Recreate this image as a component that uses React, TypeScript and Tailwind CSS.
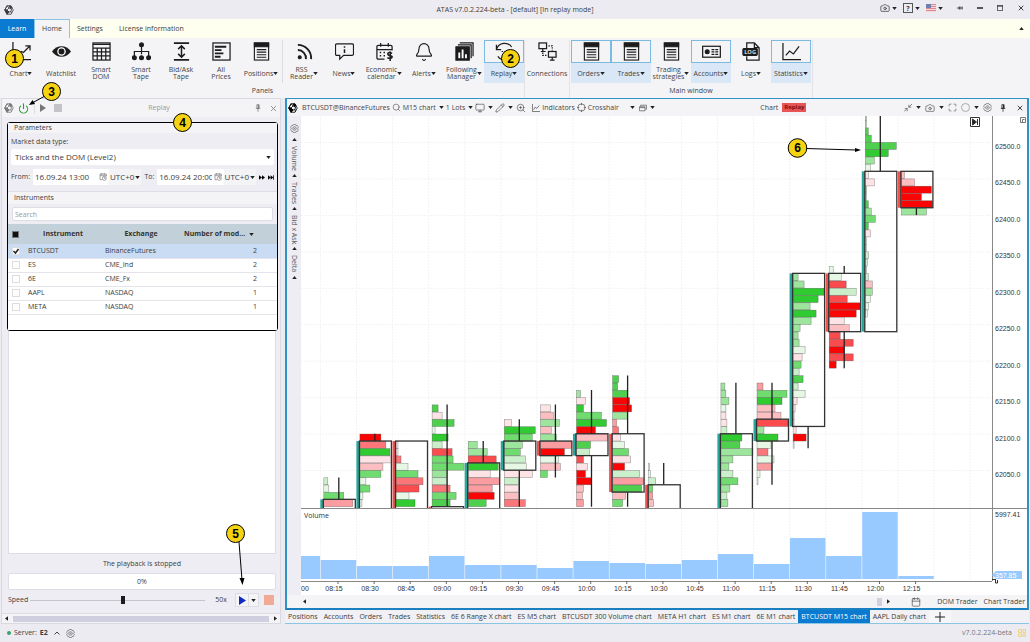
import React, { useState } from 'react';
import { Bell, Calendar, Camera, Maximize, Monitor, Pencil, Pin, Power, Search, X, ZoomIn } from 'lucide-react';

type Candle = {
  col: number;
  first: number;
  rows: string;
  body: [number, number];
  wick: [number, number];
  up: boolean;
};

type RibbonItem = {
  label: string[];
  icon: React.ReactNode;
  menu?: boolean;
  active?: boolean;
  callout?: number;
};

const COL_WIDTH = 36.1;
const ROW_HEIGHT = 7.29;
const PRICE_STEP = 36.45;

// Each cluster is "<width><colour>", listed from the highest price down
const candles: Candle[] = [
  { col: 0, first: 42, rows: '4g2 5g1 20g4 29r3', body: [45, 48], wick: [42, 45], up: true },
  { col: 1, first: 36, rows: '21r6 26r4 30g6 32r1 23r2 21g4 6g1 10g4 3g1 2g1', body: [37, 48], wick: [36, 37], up: true },
  { col: 2, first: 37, rows: '2r1 2r1 5r4 12g1 22g4 27r4 23r5 13g1 19g6', body: [37, 48], wick: [37, 37], up: false },
  { col: 3, first: 32, rows: '6g5 10r1 22g5 3g1 16g6 10g2 20r5 21g4 32g4 15g3 15g2 18r4 24g4 18g5', body: [46, 48], wick: [32, 46], up: false },
  { col: 4, first: 37, rows: '9g3 19g3 28r5 30g6 22r1 31r3 24r3 26r6 18g5', body: [40, 48], wick: [37, 40], up: true },
  { col: 5, first: 34, rows: '7r1 31g6 28g4 18g3 16g4 21g2 22g1 28r1 14g2 14r1 14r2 21r4', body: [37, 41], wick: [34, 46], up: true },
  { col: 6, first: 32, rows: '10r1 13r2 19g3 11r2 16g3 31r3 24r6 18g1 20r2 7g4', body: [37, 39], wick: [32, 42], up: false },
  { col: 7, first: 30, rows: '4g3 9r1 7g6 25g4 30g6 19r6 31r2 14g5 13g2 7r5 11r1 9r6 15r6 7r2 6r2 7r3', body: [36, 39], wick: [30, 46], up: true },
  { col: 8, first: 28, rows: '6g5 5g5 15g5 17r6 19r6 15g3 4r3 6r4 8r1 12g1 16g4 18r1 12r6 27g2 31r3 29g5 13r2 10g4', body: [36, 44], wick: [28, 46], up: false },
  { col: 9, first: 40, rows: '1g1 2g1 7g2 4g4 4r3 5r2', body: [43, 48], wick: [40, 43], up: false },
  { col: 11, first: 29, rows: '4g3 5g3 8g3 5g1 5r1 6r1 6g2 21g6 19g5 32g3 12g3 8g3 12g2 17g4 9g3 6g2 7g3', body: [36, 48], wick: [29, 36], up: true },
  { col: 12, first: 29, rows: '6r3 30g4 25g6 18r2 24r2 31r5 7g3 21g6 14g1 11r4 17g1 15r3 3g1 1g1', body: [34, 37], wick: [29, 43], up: true },
  { col: 13, first: 14, rows: '5g3 11g3 31g6 25g6 17g3 23g6 18g3 7g3 5g3 6g3 12g1 9r1 8g4 6g2 10g5 5g2 12g1 4r1 2r1 1g1 1g1 3r1 13r6 1g1', body: [14, 35], wick: [14, 38], up: true },
  { col: 14, first: 13, rows: '4g1 12g1 17r5 27g2 18r5 31r6 27r6 15r1 20r2 11r5 24r5 15r6 24r5 7r6', body: [14, 22], wick: [13, 27], up: false },
  { col: 15, first: -8, rows: '1g3 1g3 3g5 6g5 31g5 23g6 9g3 5g1 3r1 9r1 1g4 1g3 3g5 6g3 10g4 3g5 5r1 1g1 1g1 3g2 2g2 1g2 3g2 7r2 7g3 5g1 3g1 2g1', body: [0, 22], wick: [-8, 22], up: true },
  { col: 16, first: 0, rows: '3r2 13r2 30r6 20r6 31r6 25g3', body: [0, 5], wick: [0, 6], up: false },
];

const palette: Record<string, string> = {
  g1: '#e6f7e6', g2: '#cbefcb', g3: '#9de49d', g4: '#70dc70', g5: '#4ed04e', g6: '#30cb30',
  r1: '#fde3e5', r2: '#fbbfc2', r3: '#fb9da0', r4: '#fb7679', r5: '#fa4b4e', r6: '#fa0505',
};

const volumes = [23, 19, 13, 13, 23, 14, 14, 11, 18, 16, 15, 19, 25, 15, 41, 23, 67, 3];
const times = ['08:15', '08:30', '08:45', '09:00', '09:15', '09:30', '09:45', '10:00', '10:15', '10:30', '10:45', '11:00', '11:15', '11:30', '11:45', '12:00', '12:15'];
const prices = [62500, 62450, 62400, 62350, 62300, 62250, 62200, 62150, 62100, 62050];

const instruments = [
  { name: 'BTCUSDT', exchange: 'BinanceFutures', modes: 2 },
  { name: 'ES', exchange: 'CME_Ind', modes: 2 },
  { name: '6E', exchange: 'CME_Fx', modes: 2 },
  { name: 'AAPL', exchange: 'NASDAQ', modes: 1 },
  { name: 'META', exchange: 'NASDAQ', modes: 1 },
];

const chartTabs = ['Positions', 'Accounts', 'Orders', 'Trades', 'Statistics', '6E 6 Range X chart', 'ES M5 chart', 'BTCUSDT 300 Volume chart', 'META H1 chart', 'ES M1 chart', '6E M1 chart', 'BTCUSDT M15 chart', 'AAPL Daily chart'];

const Caret = ({ className = '' }: { className?: string }) => (
  <svg viewBox="0 0 6 4" className={`h-[3px] w-[5px] shrink-0 fill-[#222] ${className}`}>
    <path d="M0 0h6L3 4z" />
  </svg>
);

const Logo = ({ className = '' }: { className?: string }) => (
  <svg viewBox="0 0 20 20" className={`size-[10px] shrink-0 ${className}`} fill="none" stroke="currentColor" strokeWidth="1.6">
    <path d="M6 1.5h8l4.5 8.5-4.5 8.5H6L1.5 10z" />
    <path d="M6 1.5 10 6 6 10 1.5 10zM6 10l4 4 4-1 1-5-5-2M10 14l-4 4.5M14 13l1 4" />
    <path d="M6 10l4 4-4 4.5L1.5 10zM10 2h4l2 4-3 1z" fill="currentColor" />
  </svg>
);

const Gear = () => (
  <svg viewBox="0 0 20 20" className="size-[9px] shrink-0" fill="none" stroke="#666" strokeWidth="1.5">
    <path d="M7.5 1h5l1 2.5 2.5-.5 2.5 4.5L17 10l1.5 2.5L16 17l-2.5-.5-1 2.5h-5l-1-2.5L4 17l-2.5-4.5L3 10 1.5 7.5 4 3l2.5.5z" />
    <circle cx="10" cy="10" r="4" />
    <circle cx="10" cy="10" r="1" />
  </svg>
);

const PinIcon = ({ className = '' }: { className?: string }) => (
  <svg viewBox="0 0 8 10" className={`h-2 w-[6px] shrink-0 ${className}`} fill="none" stroke="currentColor">
    <path d="M2.500 0.500h3v5h-3zM1 5.500h6M4 5.500V10" />
    <path d="M4.500 1v4" strokeWidth="1.500" />
  </svg>
);

const Badge = ({ n, className = '' }: { n: number; className?: string }) => (
  <span className={`pointer-events-none absolute z-10 flex size-[19px] items-center justify-center rounded-full border border-black bg-[#f5d312] font-['Liberation_Sans',sans-serif] text-[12px] leading-none font-bold text-black ${className}`}>
    {n}
  </span>
);

const Ic = ({ children }: { children: React.ReactNode }) => (
  <svg viewBox="0 0 20 20" className="size-[19px]" fill="none" stroke="#1c1c1c" strokeWidth="1.3">
    {children}
  </svg>
);

const ListIcon = () => (
  <svg viewBox="0 0 20 20" className="size-[19px]" fill="none" stroke="#1c1c1c" strokeWidth="1.2">
    <rect x="2.5" y="1" width="15" height="18" />
    <path d="M2.5 1h15v4h-15z" fill="#1c1c1c" />
    <path d="M5 8h10M5 10.7h10M5 13.4h10M5 16.1h10" />
  </svg>
);

const panelItems: RibbonItem[] = [
  { label: ['Chart'], menu: true, callout: 1, icon: <Ic><path d="M1 0v18.5h19M5 14l5-4 2 1 7-7M14 4h5v5" /></Ic> },
  { label: ['Watchlist'], icon: <Ic><path d="M0 10C5 2.5 15 2.5 20 10 15 17.5 5 17.5 0 10z" fill="#1c1c1c" stroke="none" /><circle cx="10" cy="10" r="4.5" fill="#fff" stroke="none" /><circle cx="10" cy="10" r="2.5" fill="#1c1c1c" /></Ic> },
  { label: ['Smart', 'DOM'], icon: <Ic><rect x="1" y="1" width="18" height="18" /><path d="M1 2.5h18M1 6.5h18M1 10.5h18M1 14.5h18M5.5 6v13M10 6v13M14.5 6v13" /></Ic> },
  { label: ['Smart', 'Tape'], icon: <Ic><path d="M10 4v9M2.5 15v-5h15v5" /><circle cx="10" cy="3" r="2" fill="#1c1c1c" /><circle cx="2.5" cy="16.5" r="2" fill="#1c1c1c" /><circle cx="10" cy="16.5" r="2" fill="#1c1c1c" /><circle cx="17.5" cy="16.5" r="2" fill="#1c1c1c" /></Ic> },
  { label: ['Bid/Ask', 'Tape'], icon: <Ic><path d="M2 1.2h16M2 18.8h16" strokeWidth="1.8" /><path d="M10 4v12M6.5 7.5 10 4l3.5 3.5M6.5 12.5 10 16l3.5-3.5" strokeWidth="1.6" /></Ic> },
  { label: ['All', 'Prices'], icon: <Ic><rect x="1" y="1" width="18" height="18" /><path d="M3 5h12M3 8.5h7M3 12h9M3 15.5h6" strokeWidth="2" /></Ic> },
  { label: ['Positions'], menu: true, icon: <ListIcon /> },
];

const serviceItems: RibbonItem[] = [
  { label: ['RSS', 'Reader'], menu: true, icon: <Ic><circle cx="5" cy="16" r="1.5" fill="#1c1c1c" /><path d="M3 8.5a8.5 8.5 0 0 1 8.5 9.5M3 3a14 14 0 0 1 14 15" strokeWidth="2" /></Ic> },
  { label: ['News'], menu: true, icon: <Ic><path d="M2 2h16q1.5 0 1.5 1.5v9q0 1.5-1.5 1.5H9l-4 4v-4H2Q.5 14 .5 12.5v-9Q.5 2 2 2z" /><path d="M10 4.5V6M10 7.5v4" strokeWidth="1.6" /></Ic> },
  { label: ['Economic', 'calendar'], menu: true, icon: <Ic><path d="M10 18H3.5Q2 18 2 16.5V5q0-1.5 1.5-1.5h13Q18 3.5 18 5v4M2 8h16M6 1v4M14 1v4" /><path d="M5 11h1.5M9 11h1.5M5 14.5h1.5M9 14.5h1.5M18 12q-4-2-4.5 0 0 2 2.500 2.500T18 16q-1 2-5 .5M16 10v10" strokeWidth="1.6" /></Ic> },
  { label: ['Alerts'], menu: true, icon: <Bell className="size-[20px] text-[#1c1c1c]" strokeWidth={1.4} /> },
  { label: ['Following', 'Manager'], menu: true, icon: <Ic><path d="M1 5h14v14H1z" fill="#1c1c1c" /><path d="M3 3h14v14M5 1h14v14" /><path d="M4.5 17v-6M8 17V8M11.5 17v-4" stroke="#fff" strokeWidth="2" /></Ic> },
  { label: ['Replay'], menu: true, active: true, callout: 2, icon: <Ic><path d="M1.5 3v5h5M1.5 8A9 9 0 0 1 18 6M19 12A9 9 0 0 1 3 15" strokeDasharray="20 2" /><path d="M7 10h7" strokeDasharray="1.5 1.5" /></Ic> },
];

const connectionItems: RibbonItem[] = [
  { label: ['Connections'], icon: <Ic><rect x="1" y="1" width="8" height="6" /><path d="M5 7v3M3 10h5" /><rect x="11" y="10" width="8" height="6" /><path d="M15 16v3M12.5 19h5" /><path d="M11 4h4v5M5 11v3h5" strokeDasharray="1.5 1.2" /></Ic> },
];

const windowItems: RibbonItem[] = [
  { label: ['Orders'], menu: true, active: true, icon: <ListIcon /> },
  { label: ['Trades'], menu: true, active: true, icon: <ListIcon /> },
  { label: ['Trading', 'strategies'], menu: true, icon: <ListIcon /> },
  { label: ['Accounts'], menu: true, active: true, icon: <Ic><rect x=".7" y="4.5" width="18.6" height="11.5" /><circle cx="5.5" cy="10.2" r="2" fill="#1c1c1c" /><path d="M10 8h3M14 8h3M10 10.5h3M14 10.5h3M10 13h3M14 13h3" /></Ic> },
  { label: ['Logs'], menu: true, icon: <Ic><path d="M5 7V1h8l5 5v13H5v-4M13 1v5h5" /><rect x="1" y="7" width="15" height="7" rx="1" fill="#1c1c1c" /><text x="8.5" y="12.6" fontSize="6" fontWeight="700" textAnchor="middle" fill="#ddd" stroke="none">LOG</text></Ic> },
  { label: ['Statistics'], menu: true, active: true, icon: <Ic><path d="M1 1v17.5h19M4 14l4-4.5 4 3 6-8" /></Ic> },
];

const RibbonButton = ({ item }: { item: RibbonItem }) => (
  <button type="button" className="relative w-10 shrink-0">
    <span className={`flex h-[23px] items-center justify-center ${item.active ? 'border border-[#7abbdf]' : ''}`}>{item.icon}</span>
    <span className={`flex h-5 items-center justify-center leading-[7px] ${item.active ? 'bg-[#d9e7f7]' : ''}`}>
      <span>
        {item.label.map((line) => (
          <span key={line} className="block">{line}</span>
        ))}
      </span>
      {item.menu && <Caret />}
    </span>
    {item.callout === 1 && <Badge n={1} className="top-[9px] left-1" />}
    {item.callout === 2 && <Badge n={2} className="top-[9px] left-[17px]" />}
  </button>
);

const Ribbon = () => (
  <div className="flex h-[60px] overflow-hidden bg-[#f4f4f7] pt-[2px] pl-px text-[#444]">
    <div className="border-r border-[#e2e2e8]">
      <div className="flex">
        {panelItems.map((item) => <RibbonButton key={item.label.join(' ')} item={item} />)}
        <span className="mx-px w-px bg-[#dcdce3]" />
        {serviceItems.map((item) => <RibbonButton key={item.label.join(' ')} item={item} />)}
      </div>
      <p className="mt-[3px] text-center leading-[10px]">Panels</p>
    </div>
    <div className="flex items-start border-r border-[#e2e2e8] px-[2px]">
      {connectionItems.map((item) => <RibbonButton key={item.label.join(' ')} item={item} />)}
    </div>
    <div className="border-r border-[#e2e2e8] px-px">
      <div className="flex">
        {windowItems.map((item) => <RibbonButton key={item.label.join(' ')} item={item} />)}
      </div>
      <p className="mt-[3px] text-center leading-[10px]">Main window</p>
    </div>
  </div>
);

const TitleBar = () => (
  <header className="relative flex h-[19px] items-center justify-between bg-[#ecebf2] px-1">
    <Logo />
    <h1 className="absolute inset-x-0 text-center leading-[19px]">ATAS v7.0.2.224-beta - [default] [In replay mode]</h1>
    <div className="relative flex items-center gap-[14px] pr-px pb-[3px]">
      <div className="flex items-center gap-[6px]">
        <button type="button" aria-label="Screenshot" className="flex items-center gap-[2px]"><Camera className="size-[10px]" strokeWidth={1.8} /><Caret /></button>
        <button type="button" className="flex items-center gap-[2px]"><span className="flex size-[10px] items-center justify-center border border-[#555] leading-none font-bold">?</span><Caret /></button>
        <button type="button" aria-label="Language" className="flex items-center gap-[2px]">
          <svg viewBox="0 0 10 8" className="h-2 w-[10px]">
            <path d="M0 0h10v8H0z" fill="#f4d5d8" />
            <path d="M0 .5h10M0 2.5h10M0 4.5h10M0 6.5h10" stroke="#dc8a92" />
            <path d="M0 0h5v4H0z" fill="#6d7fb0" />
          </svg>
          <Caret />
        </button>
      </div>
      <button type="button" aria-label="Pin"><svg viewBox="0 0 8 8" className="size-[6px]" stroke="#222" fill="none"><path d="M0 4h3M3 2v4M3 3h5M3 5h5" /></svg></button>
      <button type="button" aria-label="Minimize"><svg viewBox="0 0 8 8" className="size-[6px]"><path d="M0 3h8v2H0z" fill="#222" /></svg></button>
      <button type="button" aria-label="Restore"><svg viewBox="0 0 8 8" className="size-[6px]" stroke="#222" fill="none"><path d="M.5.5h7v7h-7zM0 1.5h8" /></svg></button>
      <button type="button" aria-label="Close"><X className="size-2" strokeWidth={3} /></button>
    </div>
  </header>
);

const Menu = () => (
  <nav className="flex h-[19px] items-stretch bg-[#fffff0] leading-[19px]">
    <button type="button" className="w-[34px] bg-[#0a7bd0] text-white">Learn</button>
    <button type="button" className="w-9 border border-b-0 border-[#8bc5e4] bg-[#f4f4f7] leading-[18px]">Home</button>
    <button type="button" className="ml-[7px]">Settings</button>
    <button type="button" className="ml-4">License information</button>
    <button type="button" aria-label="Collapse ribbon" className="mr-[6px] ml-auto"><Caret className="rotate-180" /></button>
  </nav>
);

const DateField = ({ id, value, label, className }: { id: string; value: string; label: string; className: string }) => (
  <>
    <label htmlFor={id} className="shrink-0">{label}</label>
    <div className={`flex h-4 min-w-0 items-center bg-white pl-[2px] text-[8px] ${className}`}>
      <input id={id} defaultValue={value} className="w-0 min-w-0 flex-1 outline-none" />
      <svg viewBox="0 0 12 12" className="mx-[2px] size-2 shrink-0" fill="none" stroke="#777">
        <path d="M11 5V1.5H1.5V10H5M1.5 4H11M4 0v3M8 0v3" />
        <circle cx="8" cy="8" r="3" />
        <path d="M8 6v2h2" />
      </svg>
      <button type="button" className="flex h-4 items-center gap-px bg-[#f4f4f7] px-px">UTC+0<Caret /></button>
    </div>
  </>
);

const ReplayPanel = () => {
  const [selected, setSelected] = useState<string[]>(['BTCUSDT']);
  const [speed, setSpeed] = useState(53);

  const toggle = (name: string) => {
    setSelected((prev) => (prev.includes(name) ? prev.filter((n) => n !== name) : [...prev, name]));
  };

  return (
    <section className="ml-px flex w-[280px] shrink-0 flex-col border border-[#d9d9e2] bg-[#eeedf3]">
      <header className="relative flex h-[18px] items-center bg-[#f4f4f7] px-[2px] text-[#777]">
        <Logo />
        <button type="button" aria-label="Power" className="ml-1"><Power className="size-[11px] text-[#2f9a35]" strokeWidth={2.4} /></button>
        <span className="mx-[5px] h-3 w-px bg-[#dcdce3]" />
        <button type="button" aria-label="Play"><svg viewBox="0 0 6 8" className="h-2 w-[6px] fill-[#777]"><path d="M0 0l6 4-6 4z" /></svg></button>
        <button type="button" aria-label="Stop" className="ml-2 size-2 bg-[#c4c4c8]" />
        <h2 className="pointer-events-none absolute inset-x-0 pl-9 text-center text-[#999]">Replay</h2>
        <button type="button" aria-label="Pin panel" className="ml-auto"><PinIcon /></button>
        <button type="button" aria-label="Close panel" className="ml-2"><X className="size-[9px]" strokeWidth={2} /></button>
        <Badge n={3} className="-top-[17px] left-10" />
        <svg viewBox="0 0 18 12" className="pointer-events-none absolute -top-1 left-[26px] h-3 w-[18px]">
          <path d="M17 1 5 7.5" stroke="#000" />
          <path d="M1 10l3.5-5 2.5 4z" />
        </svg>
      </header>

      <div className="relative mt-[5px] mr-[2px] ml-[5px] rounded-[3px] border border-black">
        <Badge n={4} className="-top-[10px] left-[165px]" />
        <h3 className="bg-[#f4f4f7] pl-[6px] leading-[10px]">Parameters</h3>
        <div className="px-[3px] pb-[3px]">
          <label htmlFor="market-data" className="block pt-1 leading-[10px]">Market data type:</label>
          <div className="relative mt-[2px] rounded-[2px] bg-white">
            <select id="market-data" className="block h-4 w-full appearance-none pl-1 text-[8px] outline-none">
              <option>Ticks and the DOM (Level2)</option>
            </select>
            <Caret className="absolute top-[7px] right-[3px]" />
          </div>
          <div className="mt-1 flex items-center gap-[3px]">
            <DateField id="from" label="From:" value="16.09.24 13:00" className="flex-11" />
            <DateField id="to" label="To:" value="16.09.24 20:00" className="flex-10" />
            <button type="button" aria-label="Forward"><svg viewBox="0 0 8 6" className="h-[5px] w-[6px]"><path d="M0 0l4 3-4 3zM4 0l4 3-4 3z" /></svg></button>
            <button type="button" aria-label="To end"><svg viewBox="0 0 8 6" className="h-[5px] w-[6px]"><path d="M0 0l3.5 3L0 6zM3.5 0L7 3 3.5 6zM7 0h1v6H7z" /></svg></button>
          </div>
        </div>
        <h3 className="mt-[3px] border-t border-[#dddde5] bg-[#f4f4f7] pl-[6px] leading-[12px]">Instruments</h3>
        <div className="px-1 pt-[3px] pb-[3px]">
          <input type="search" aria-label="Search instruments" placeholder="Search" className="h-[14px] w-full rounded-[2px] border border-[#dddde5] bg-white px-[2px] outline-none placeholder:text-[#999]" />
        </div>
        <div className="h-[106px] bg-white">
          <table className="w-full table-fixed border-collapse">
            <colgroup>
              <col className="w-4" />
              <col className="w-[78px]" />
              <col className="w-[78px]" />
              <col />
            </colgroup>
            <thead className="bg-[#c2d1d9] text-[#333]">
              <tr className="h-5">
                <th className="p-0"><button type="button" aria-label="Select all" className="ml-1 block size-[7px] border border-[#777] bg-[#111]" /></th>
                <th>Instrument</th>
                <th>Exchange</th>
                <th><span className="flex items-center gap-1 pl-1">Number of mod...<Caret /></span></th>
              </tr>
            </thead>
            <tbody>
              {instruments.map((row) => {
                const checked = selected.includes(row.name);
                return (
                  <tr key={row.name} className={`h-[14px] border-b border-[#e4e4ea] leading-[12px] ${checked ? 'bg-[#c9dcf3]' : ''}`}>
                    <td className="p-0">
                      <span className="relative ml-1 block size-2">
                        <input
                          type="checkbox"
                          aria-label={row.name}
                          checked={checked}
                          onChange={() => toggle(row.name)}
                          className="block size-2 appearance-none border border-[#ddd] bg-white"
                        />
                        {checked && <svg viewBox="0 0 8 8" className="pointer-events-none absolute inset-0 size-2" fill="none" stroke="#222" strokeWidth="1.5"><path d="M1.5 4l2 2 3-4" /></svg>}
                      </span>
                    </td>
                    <td className="pl-1">{row.name}</td>
                    <td className="pl-[3px]">{row.exchange}</td>
                    <td className="pr-5 text-right">{row.modes}</td>
                  </tr>
                );
              })}
            </tbody>
          </table>
        </div>
      </div>

      <div className="mr-1 ml-[6px] flex-1 border border-t-0 border-[#dddde5] bg-white" />

      <div className="relative pr-1 pl-[6px]">
        <p className="pt-1 pb-[3px] text-center leading-[12px]">The playback is stopped</p>
        <div role="progressbar" aria-valuenow={0} className="h-[17px] rounded-[2px] border border-[#dddde5] bg-white text-center leading-[16px]">0%</div>
        <div className="mt-[2px] mb-[5px] flex h-4 items-center">
          <label htmlFor="speed">Speed</label>
          <input
            id="speed"
            type="range"
            value={speed}
            onChange={(e) => setSpeed(Number(e.target.value))}
            className="mx-[2px] h-px min-w-0 flex-1 appearance-none bg-[#c4c4cc] [&::-webkit-slider-thumb]:h-2 [&::-webkit-slider-thumb]:w-1 [&::-webkit-slider-thumb]:appearance-none [&::-webkit-slider-thumb]:bg-[#1c1c1c]"
          />
          <output htmlFor="speed" className="mx-2">50x</output>
          <button type="button" aria-label="Start playback" className="flex h-[14px] w-[14px] items-center justify-center border border-[#dddde5] bg-[#f4f4f7]"><svg viewBox="0 0 7 9" className="h-[9px] w-[7px] fill-[#1128c4]"><path d="M0 0l7 4.5L0 9z" /></svg></button>
          <button type="button" aria-label="Playback options" className="flex h-[14px] w-[10px] items-center justify-center border border-l-0 border-[#dddde5] bg-[#f4f4f7]"><Caret /></button>
          <button type="button" aria-label="Stop playback" className="mr-[2px] ml-[5px] size-[10px] bg-[#f2a995]" />
        </div>
        <Badge n={5} className="-top-[30px] right-[35px]" />
        <svg viewBox="0 0 10 44" className="pointer-events-none absolute -top-[12px] right-[34px] h-11 w-[10px]">
          <path d="M3 0 6 38" stroke="#000" />
          <path d="M3.5 36h5L6.5 43z" />
        </svg>
      </div>
      <div className="flex h-[10px] items-center gap-1 border-t border-[#dddde5] bg-[#f4f4f7] px-[2px]">
        <Caret className="rotate-90" />
        <div className="h-[6px] flex-1 bg-[#cfcfdf]" />
        <Caret className="-rotate-90" />
      </div>
    </section>
  );
};

const ChartCanvas = () => {
  const colX = (col: number) => 22.3 + col * COL_WIDTH;
  const rowY = (row: number) => 55.3 + row * ROW_HEIGHT;

  return (
    <svg viewBox="0 0 726 479" className="block h-auto min-w-0 flex-1 bg-white font-['Liberation_Sans',sans-serif]" role="img" aria-label="BTCUSDT M15 chart">
      <defs>
        <clipPath id="plot"><rect width="691" height="392" /></clipPath>
        <clipPath id="volume"><rect y="393" width="691" height="72" /></clipPath>
      </defs>
      <g stroke="#f5f3f1" strokeDasharray="2 1">
        {[...Array(19)].map((_, i) => <path key={i} d={`M${19.4 + i * COL_WIDTH} 0v465`} />)}
        {prices.map((p, i) => <path key={p} d={`M0 ${26.5 + i * PRICE_STEP}h690`} />)}
      </g>

      <g clipPath="url(#plot)">
        {candles.map((c) => {
          const x = colX(c.col);
          const [top, bottom] = c.body;
          return (
            <g key={c.col}>
              <rect x={x - 3} y={rowY(top)} width="3" height={rowY(bottom) - rowY(top)} fill={c.up ? '#2aa79c' : '#ee5350'} />
              {c.rows.split(' ').map((cell, i) => (
                <rect
                  key={i}
                  x={x + 0.5}
                  y={rowY(c.first + i) + 0.3}
                  width={parseInt(cell, 10)}
                  height={ROW_HEIGHT - 0.3}
                  fill={palette[cell.slice(-2)]}
                  stroke="#444"
                  strokeOpacity="0.6"
                  strokeWidth="0.5"
                />
              ))}
              <path d={`M${x + 15.5} ${rowY(c.wick[0])}V${rowY(top)}M${x + 15.5} ${rowY(bottom)}V${rowY(Math.max(bottom, c.wick[1]))}`} stroke="#222" strokeWidth="1.3" />
              <rect x={x} y={rowY(top)} width="32" height={rowY(bottom) - rowY(top)} fill="none" stroke="#333" strokeWidth="1.3" />
            </g>
          );
        })}
      </g>

      <g clipPath="url(#volume)">
        {volumes.map((v, i) => <rect key={i} x={19.7 + (i - 1) * COL_WIDTH} y={463 - v} width={COL_WIDTH - 0.6} height={v} fill="#99caff" />)}
      </g>
      <path d="M0 392.5h726M0 465.5h691M691.5 0v465" stroke="#888" fill="none" />
      <text x="3" y="402" fontSize="7" fill="#333" className="font-['Open_Sans',sans-serif]">Volume</text>

      <g fontSize="7" fill="#333" textAnchor="middle">
        <text x="4" y="475">00</text>
        {times.map((t, i) => (
          <g key={t}>
            <path d={`M${37 + i * COL_WIDTH} 465v3`} stroke="#666" />
            <text x={33 + i * COL_WIDTH} y="475">{t}</text>
          </g>
        ))}
      </g>
      <g fontSize="7" fill="#333">
        {prices.map((p, i) => <text key={p} x="694" y={33 + i * PRICE_STEP}>{p.toFixed(1)}</text>)}
        <text x="694" y="401">5997.41</text>
        <path d="M691 459l4-4h26v8h-26z" fill="#99caff" />
        <text x="694" y="462" fill="#fff">357.85</text>
        <path d="M691 463.5h4M694.5 464v3h2v-3" stroke="#333" fill="none" />
      </g>

      <g fill="none" stroke="#333">
        <path d="M669.5 1.5h9v9h-9zM676.5 3v6" />
        <path d="M671.5 3v6l4-3z" fill="#222" />
        <path d="M719.5 1.5h5v5h-5zM721.5 6V3.5h2" stroke="#777" />
      </g>

      <path d="M505 32.5 555 34" stroke="#000" />
      <path d="M560 34l-6-2v4z" />
      <circle cx="496.5" cy="32" r="9.3" fill="#f5d312" stroke="#000" />
      <text x="496.5" y="36.3" fontSize="12" fontWeight="700" textAnchor="middle">6</text>
    </svg>
  );
};

const Side = ({ children }: { children: React.ReactNode }) => (
  <button type="button" className="flex items-center gap-[3px] [writing-mode:vertical-rl]">
    {children}
    <Caret className="rotate-180" />
  </button>
);

const ChartPanel = () => (
  <section className="flex flex-col border-2 border-t border-[#2f93c8] border-b-[#1b80c0]">
    <header className="flex h-[17px] items-center gap-[2px] bg-[#f4f4f7] px-px whitespace-nowrap text-[#444]">
      <Logo className="text-black" />
      <span className="ml-[2px]">BTCUSDT@BinanceFutures</span>
      <button type="button" aria-label="Find instrument"><Search className="size-[9px]" strokeWidth={1.5} /></button>
      <button type="button" className="flex items-center gap-[3px]">M15 chart<Caret /></button>
      <button type="button" className="flex items-center gap-[3px]">1 Lots<Caret /></button>
      <button type="button" aria-label="Display" className="flex items-center gap-[3px]"><Monitor className="size-[10px]" strokeWidth={1.5} /><Caret /></button>
      <button type="button" aria-label="Draw" className="flex items-center gap-[3px]"><Pencil className="size-[10px]" strokeWidth={1.5} /><Caret /></button>
      <button type="button" aria-label="Zoom in" className="ml-px"><ZoomIn className="size-[10px]" strokeWidth={1.5} /></button>
      <button type="button" className="ml-1 flex items-center gap-[2px]">
        <svg viewBox="0 0 10 10" className="size-[8px]" fill="none" stroke="#555"><path d="M.5 0v9.5H10M2 7l2-3 2 1.5L9 2" /></svg>
        Indicators
      </button>
      <button type="button" className="flex items-center gap-[2px]">
        <svg viewBox="0 0 10 10" className="size-[9px]" fill="none" stroke="#555" strokeWidth=".8"><circle cx="5" cy="5" r="4" /><path d="M5 0v2.5M5 7.5V10M0 5h2.5M7.5 5H10" /></svg>
        Crosshair
        <Caret className="ml-[9px]" />
      </button>
      <button type="button" aria-label="Windows" className="ml-[2px] flex items-center gap-[3px]">
        <svg viewBox="0 0 10 10" className="size-2" fill="none" stroke="#666"><path d="M.5 3.5h7v5h-7zM2 3V1.5h7.5v5H8M.5 4.5h7" /></svg>
        <Caret />
      </button>
      <span className="mx-auto flex items-center gap-1 pl-2">Chart <b className="bg-[#e85555] px-[2px] text-[6px] leading-[9px] text-[#7a1010]">Replay</b></span>
      <div className="flex items-center gap-1">
        <svg viewBox="0 0 10 10" className="size-2" fill="none" stroke="#666"><path d="M0 9.5l4-4M1 5.5h3V9M10 0L6 4M6 1v3h3" /></svg>
        <Caret />
        <Camera className="size-[10px]" strokeWidth={1.5} />
        <Caret />
        <Maximize className="size-[9px]" strokeWidth={1.5} />
        <span className="size-[9px] rounded-full border border-[#aaa]" />
        <Caret />
        <Gear />
        <PinIcon className="mx-1 text-[#222]" />
        <X className="mx-[2px] size-2" strokeWidth={3} />
      </div>
    </header>
    <div className="flex">
      <aside className="flex w-[14px] shrink-0 flex-col items-center gap-[5px] bg-[#eeedf3] pt-2 text-[#555]">
        <Gear />
        <Caret className="rotate-180" />
        <Side>Volume</Side>
        <Side>Trades</Side>
        <Side>Bid x Ask</Side>
        <Side>Delta</Side>
      </aside>
      <ChartCanvas />
    </div>
    <div className="flex h-[13px] items-center bg-[#f4f4f7] pl-[15px]">
      <Caret className="rotate-90" />
      <span className="ml-auto h-2 w-[5px] bg-[#d0d0df]" />
      <Caret className="ml-1 -rotate-90" />
      <button type="button" aria-label="Go to date" className="ml-5"><Calendar className="size-[10px]" strokeWidth={1.5} /></button>
      <button type="button" className="ml-4">DOM Trader</button>
      <button type="button" className="mr-[2px] ml-[6px]">Chart Trader</button>
    </div>
  </section>
);

const App: React.FC = () => {
  const [activeTab, setActiveTab] = useState('BTCUSDT M15 chart');

  return (
    <div className="flex min-h-screen flex-col overflow-hidden bg-[#ecebf2] font-['Open_Sans','Noto_Sans',sans-serif] text-[7px] leading-[10px] text-[#3c3c3c]">
      <TitleBar />
      <Menu />
      <Ribbon />
      <main className="flex gap-1 pr-px">
        <ReplayPanel />
        <div className="min-w-0 flex-1">
          <ChartPanel />
          <nav className="flex h-[14px] items-stretch border-b border-[#8bc5e4] bg-[#f0f0f5] leading-[13px] whitespace-nowrap">
            {chartTabs.map((tab) => (
              <button
                key={tab}
                type="button"
                onClick={() => setActiveTab(tab)}
                className={`px-[3px] ${tab === activeTab ? 'bg-[#0a7bd0] text-white' : ''}`}
              >
                {tab}
              </button>
            ))}
            <button type="button" aria-label="Add tab" className="flex w-[22px] items-center justify-center bg-[#f6f6f9]">
              <svg viewBox="0 0 10 10" className="size-[10px]" stroke="#222"><path d="M5 0v10M0 5h10" /></svg>
            </button>
          </nav>
        </div>
      </main>
      <footer className="flex flex-1 items-center gap-[6px] pr-1 pl-[7px]">
        <span className="flex items-center gap-[3px]"><span className="size-1 rounded-full bg-[#3aa36c]" />Server: <b>E2</b></span>
        <svg viewBox="0 0 6 4" className="h-1 w-[6px]" fill="none" stroke="#444"><path d="M.5 3.5L3 1l2.5 2.5" /></svg>
        <Gear />
        <span className="ml-auto text-[#777]">v7.0.2.224-beta</span>
        <svg viewBox="0 0 8 8" className="size-2" fill="none" stroke="#f1d27c"><path d="M.5.5h3v3h-3zM5 .5h2.500v3H5zM.5 5h3v2.500h-3zM5 5h2.500v2.500H5z" /></svg>
      </footer>
    </div>
  );
};

export default App;
